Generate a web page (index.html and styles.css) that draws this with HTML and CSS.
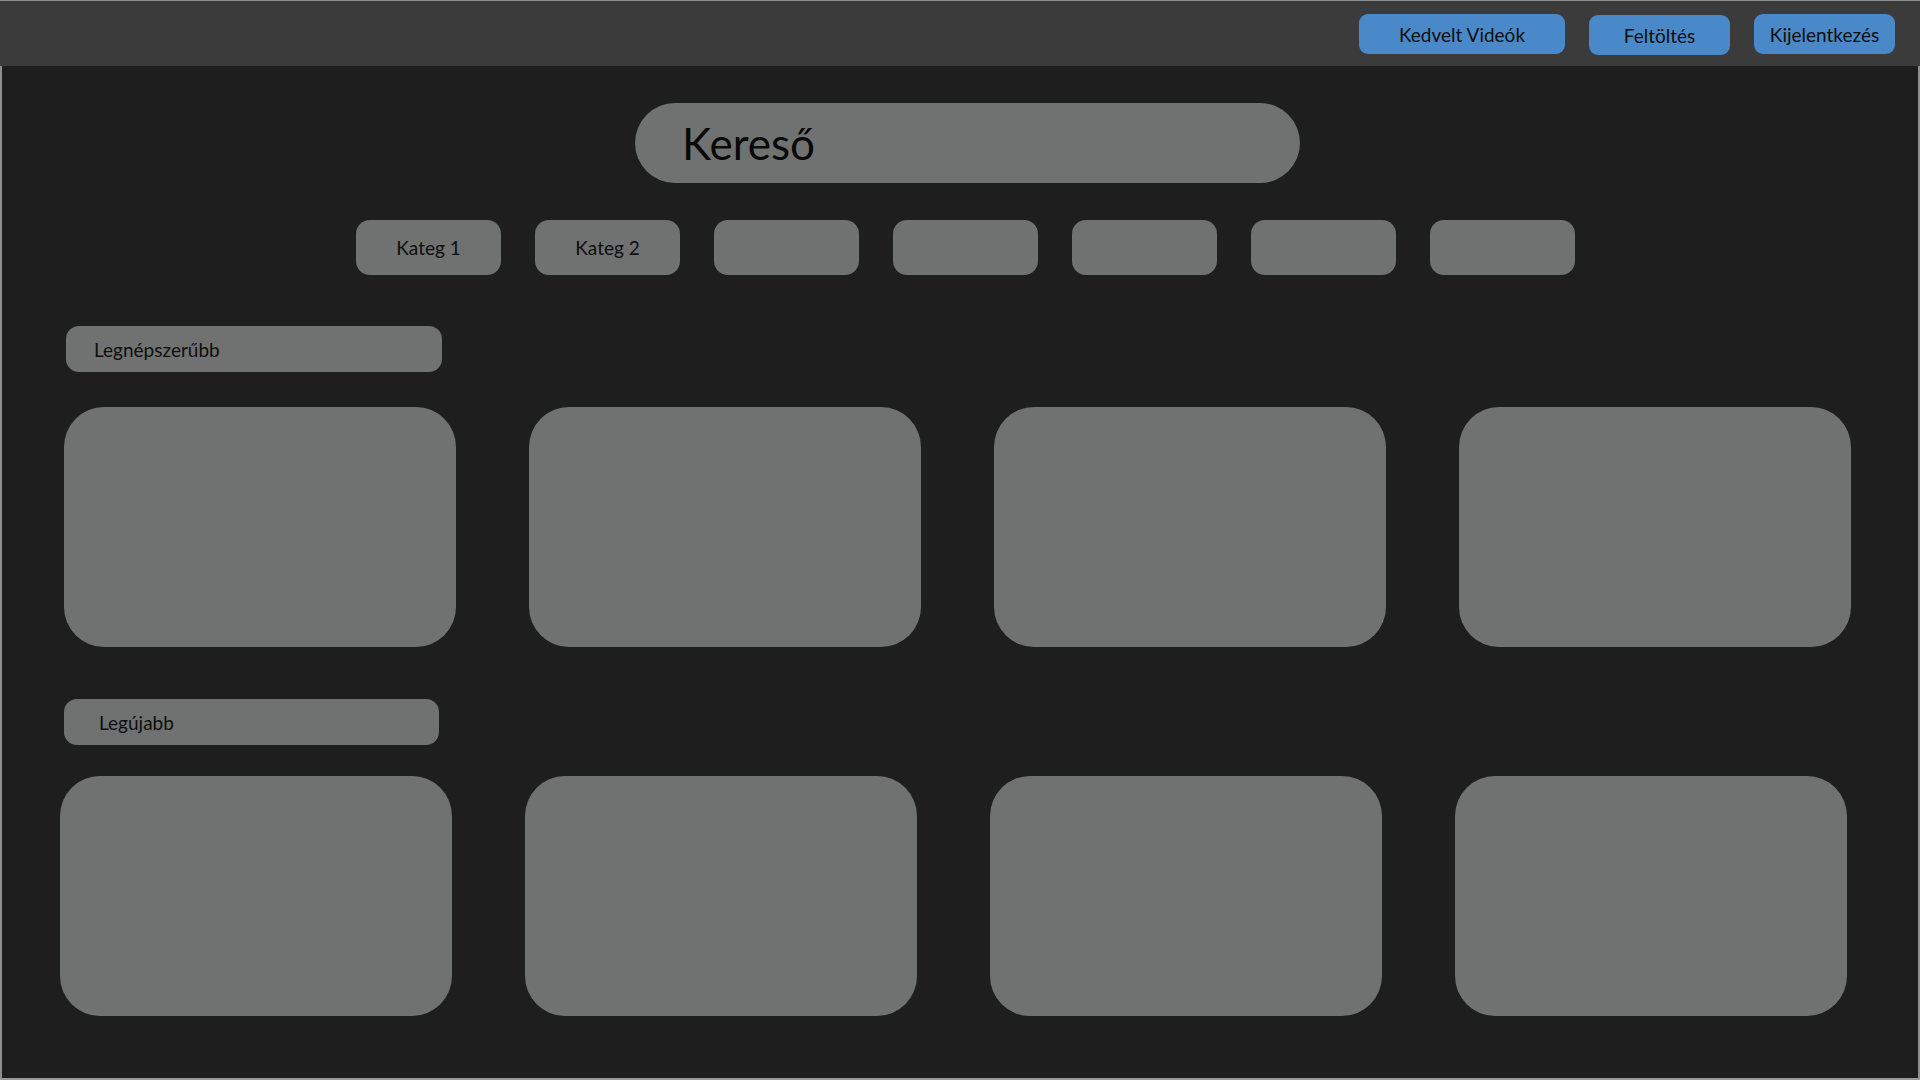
FILE: index.html
```html
<!DOCTYPE html>
<html lang="hu">
<head>
<meta charset="utf-8">
<title>Videók</title>
<link rel="stylesheet" href="styles.css">
</head>
<body>
<div class="page">
  <header class="topbar">
    <button class="nav-btn nav-btn--wide">Kedvelt Videók</button>
    <button class="nav-btn nav-btn--upload">Feltöltés</button>
    <button class="nav-btn">Kijelentkezés</button>
  </header>
  <main class="main">
    <div class="search">Kereső</div>
    <nav class="cats">
      <button class="cat">Kateg 1</button>
      <button class="cat">Kateg 2</button>
      <button class="cat"></button>
      <button class="cat"></button>
      <button class="cat"></button>
      <button class="cat"></button>
      <button class="cat"></button>
    </nav>
    <section class="section section--popular">
      <div class="label label--popular">Legnépszerűbb</div>
      <div class="cards">
        <div class="card"></div>
        <div class="card"></div>
        <div class="card"></div>
        <div class="card"></div>
      </div>
    </section>
    <section class="section section--new">
      <div class="label label--new">Legújabb</div>
      <div class="cards cards--new">
        <div class="card"></div>
        <div class="card"></div>
        <div class="card"></div>
        <div class="card"></div>
      </div>
    </section>
  </main>
</div>
</body>
</html>
```

FILE: styles.css
```css
* { box-sizing: border-box; }

html, body {
  margin: 0;
  padding: 0;
  background: #1e1e1e;
}

body {
  font-family: "Lato", "Open Sans", "Liberation Sans", sans-serif;
  color: #0e0e0e;
}

.page {
  width: 1920px;
  height: 1080px;
  display: flex;
  flex-direction: column;
  border-top: 1px solid #8e8e8e;
  border-bottom: 2px solid #9a9a9a;
  background: #1e1e1e;
  overflow: hidden;
}

.topbar {
  height: 65px;
  flex: none;
  background: #3b3b3b;
  display: flex;
  justify-content: flex-end;
  align-items: flex-start;
  gap: 24px;
  padding: 13px 25px 0 0;
}

.nav-btn {
  width: 141px;
  height: 40px;
  border: none;
  border-radius: 9px;
  background: #4a89c9;
  color: #0e0e0e;
  font-family: inherit;
  font-size: 19px;
  padding: 0;
  display: flex;
  align-items: center;
  justify-content: center;
}

.nav-btn--wide { width: 206px; }
.nav-btn--upload { margin-top: 1px; }

.main {
  flex: 1;
  border-left: 2px solid #8e8e8e;
  border-right: 2px solid #8e8e8e;
  display: flex;
  flex-direction: column;
  align-items: flex-start;
}

.search {
  margin: 37px 0 0 633px;
  width: 665px;
  height: 80px;
  border-radius: 40px;
  background: #707271;
  font-size: 44px;
  padding-left: 47px;
  display: flex;
  align-items: center;
  color: #080808;
}

.cats {
  margin: 37px 0 0 354px;
  display: flex;
  gap: 34px;
}

.cat {
  width: 145px;
  height: 55px;
  border: none;
  border-radius: 14px;
  background: #707271;
  font-family: inherit;
  font-size: 19px;
  color: #0e0e0e;
  padding: 0;
}

.section {
  display: flex;
  flex-direction: column;
  align-items: flex-start;
}

.section--popular { margin: 51px 0 0 62px; }
.section--new { margin: 52px 0 0 58px; }

.label {
  width: 376px;
  height: 46px;
  border-radius: 13px;
  background: #707271;
  font-size: 19px;
  display: flex;
  align-items: center;
  padding-left: 28px;
}

.label--popular { margin-left: 2px; }
.label--new { margin-left: 4px; width: 375px; padding-left: 35px; }

.cards {
  margin-top: 35px;
  display: flex;
  gap: 73px;
}

.cards--new { margin-top: 31px; }

.card {
  width: 392px;
  height: 240px;
  border-radius: 40px;
  background: #707271;
}
```
